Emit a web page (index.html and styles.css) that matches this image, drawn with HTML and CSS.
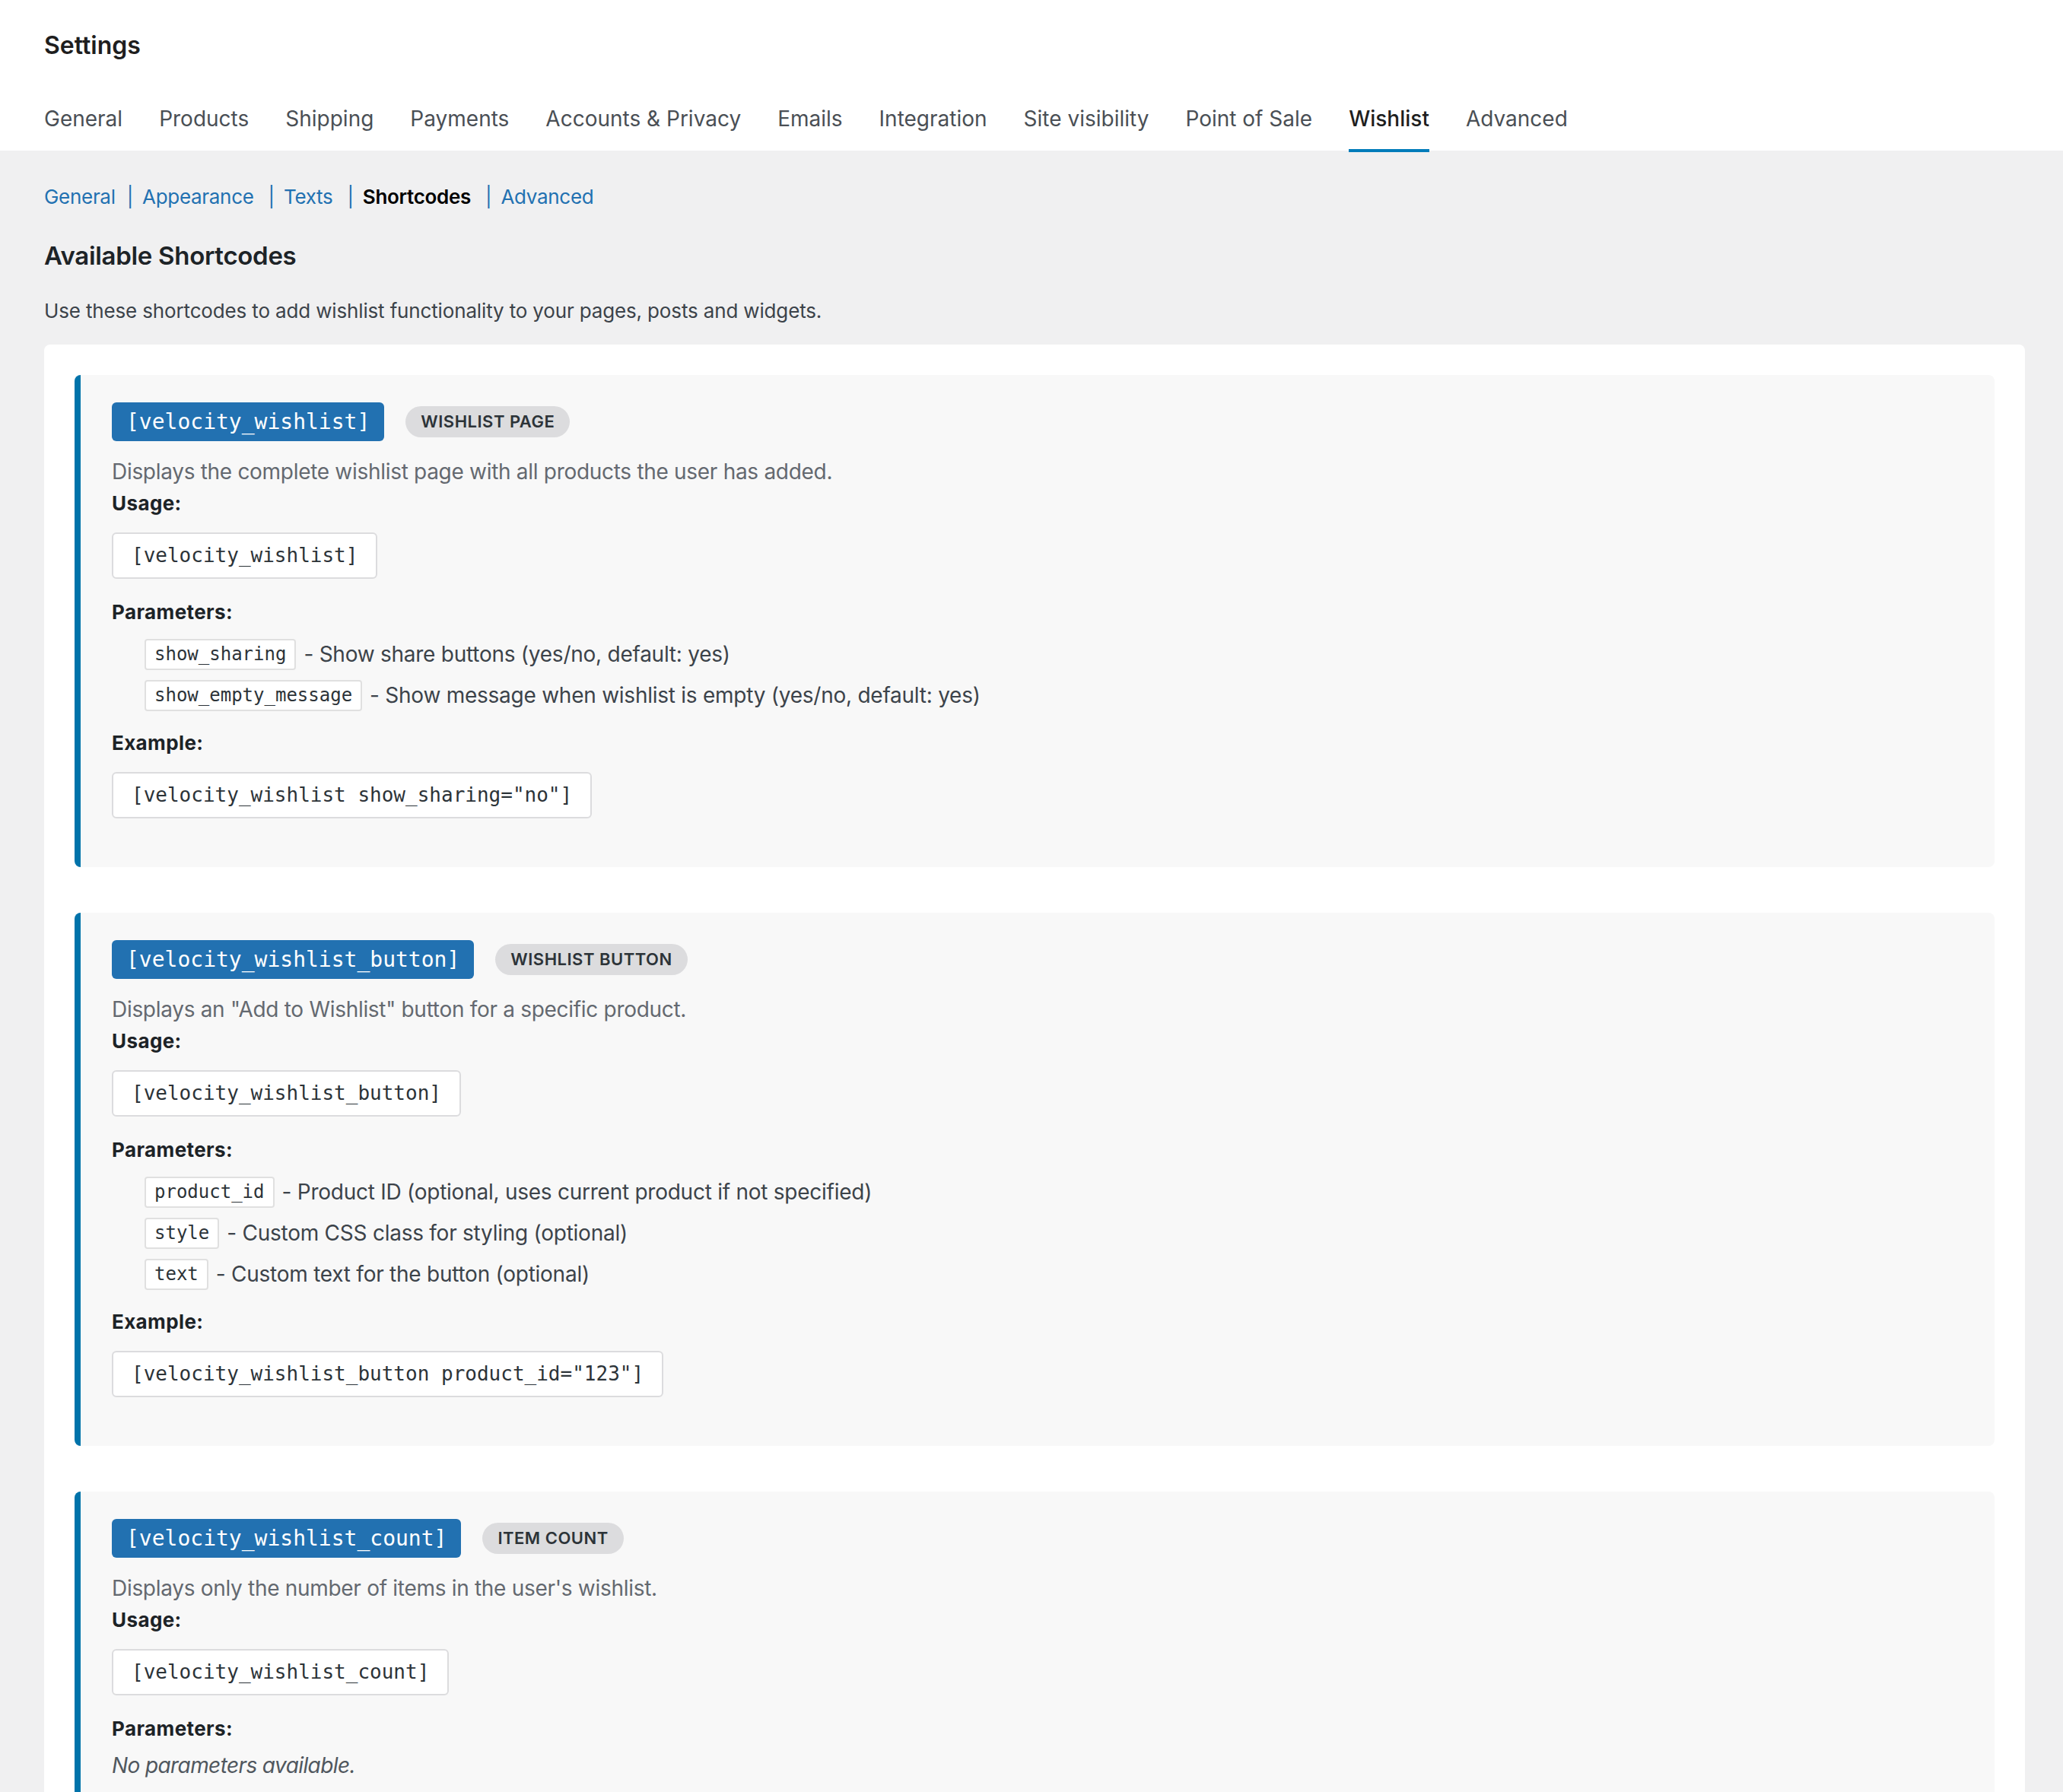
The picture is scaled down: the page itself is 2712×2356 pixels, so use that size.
FILE: index.html
```html
<!DOCTYPE html>
<html lang="en">
<head>
  <meta charset="UTF-8">
  <meta name="viewport" content="width=device-width, initial-scale=1.0">
  <title>Settings - Wishlist Shortcodes</title>
  <link rel="stylesheet" href="styles.css">
</head>
<body>

<div class="wc-header">
  <h1 class="page-title">Settings</h1>
  <nav class="nav-tabs">
    <a class="nav-tab" href="#">General</a>
    <a class="nav-tab" href="#">Products</a>
    <a class="nav-tab" href="#">Shipping</a>
    <a class="nav-tab" href="#">Payments</a>
    <a class="nav-tab" href="#">Accounts &amp; Privacy</a>
    <a class="nav-tab" href="#">Emails</a>
    <a class="nav-tab" href="#">Integration</a>
    <a class="nav-tab" href="#">Site visibility</a>
    <a class="nav-tab" href="#">Point of Sale</a>
    <a class="nav-tab active" href="#">Wishlist</a>
    <a class="nav-tab" href="#">Advanced</a>
  </nav>
</div>

<div class="wrap">
  <ul class="subsubsub">
    <li><a href="#">General</a><span class="sep">|</span></li>
    <li><a href="#">Appearance</a><span class="sep">|</span></li>
    <li><a href="#">Texts</a><span class="sep">|</span></li>
    <li><a href="#" class="current">Shortcodes</a><span class="sep">|</span></li>
    <li><a href="#">Advanced</a></li>
  </ul>

  <h2>Available Shortcodes</h2>
  <p class="intro">Use these shortcodes to add wishlist functionality to your pages, posts and widgets.</p>

  <div class="shortcodes-card">

    <div class="shortcode-item">
      <div class="shortcode-head">
        <code class="shortcode-tag">[velocity_wishlist]</code>
        <span class="shortcode-type">Wishlist Page</span>
      </div>
      <p class="shortcode-desc">Displays the complete wishlist page with all products the user has added.</p>
      <p class="label">Usage:</p>
      <div class="code-box">[velocity_wishlist]</div>
      <p class="label">Parameters:</p>
      <ul class="param-list">
        <li><code>show_sharing</code>- Show share buttons (yes/no, default: yes)</li>
        <li><code>show_empty_message</code>- Show message when wishlist is empty (yes/no, default: yes)</li>
      </ul>
      <p class="label">Example:</p>
      <div class="code-box example">[velocity_wishlist show_sharing="no"]</div>
    </div>

    <div class="shortcode-item">
      <div class="shortcode-head">
        <code class="shortcode-tag">[velocity_wishlist_button]</code>
        <span class="shortcode-type">Wishlist Button</span>
      </div>
      <p class="shortcode-desc">Displays an "Add to Wishlist" button for a specific product.</p>
      <p class="label">Usage:</p>
      <div class="code-box">[velocity_wishlist_button]</div>
      <p class="label">Parameters:</p>
      <ul class="param-list">
        <li><code>product_id</code>- Product ID (optional, uses current product if not specified)</li>
        <li><code>style</code>- Custom CSS class for styling (optional)</li>
        <li><code>text</code>- Custom text for the button (optional)</li>
      </ul>
      <p class="label">Example:</p>
      <div class="code-box example">[velocity_wishlist_button product_id="123"]</div>
    </div>

    <div class="shortcode-item">
      <div class="shortcode-head">
        <code class="shortcode-tag">[velocity_wishlist_count]</code>
        <span class="shortcode-type">Item Count</span>
      </div>
      <p class="shortcode-desc">Displays only the number of items in the user's wishlist.</p>
      <p class="label">Usage:</p>
      <div class="code-box">[velocity_wishlist_count]</div>
      <p class="label">Parameters:</p>
      <p class="no-params">No parameters available.</p>
    </div>

  </div>
</div>

</body>
</html>
```

FILE: styles.css
```css
* {
  box-sizing: border-box;
}

body {
  margin: 0;
  padding: 0;
  background-color: #f0f0f1;
  font-family: Inter, "Noto Sans", sans-serif;
  color: #3c434a;
}

/* top header with tabs */
.wc-header {
  background-color: #fff;
  height: 198px;
  padding: 40px 58px 0;
}

.page-title {
  margin: 0;
  font-size: 32px;
  line-height: 40px;
  font-weight: 600;
  color: #1e1e1e;
}

.nav-tabs {
  display: flex;
  align-items: flex-start;
  gap: 48px;
  margin-top: 58px;
}

.nav-tab {
  display: block;
  font-size: 28px;
  line-height: 36px;
  padding-bottom: 22px;
  border-bottom: 4px solid transparent;
  color: #4a4f55;
  text-decoration: none;
}

.nav-tab.active {
  color: #1e1e1e;
  font-weight: 500;
  border-bottom-color: #007cba;
}

/* page body */
.wrap {
  padding: 43px 50px 0 58px;
}

.subsubsub {
  display: flex;
  list-style: none;
  margin: 0;
  padding: 0;
  font-size: 26px;
  line-height: 36px;
  letter-spacing: -0.3px;
  color: #2271b1;
}

.subsubsub a {
  color: #2271b1;
  text-decoration: none;
}

.subsubsub a.current {
  color: #000;
  font-weight: 600;
}

.subsubsub .sep {
  margin: 0 12px 0 19px;
}

.subsubsub li:first-child .sep {
  margin-left: 15px;
}

h2 {
  margin: 37px 0 0;
  font-size: 33px;
  line-height: 44px;
  font-weight: 600;
  letter-spacing: -0.3px;
  color: #1d2327;
}

.intro {
  margin: 33px 0 0;
  font-size: 26px;
  line-height: 36px;
  letter-spacing: -0.15px;
  color: #3c434a;
}

.shortcodes-card {
  margin-top: 26px;
  background-color: #fff;
  padding: 40px;
  border-radius: 8px;
}

.shortcode-item {
  background-color: #f8f8f8;
  border-left: 8px solid #0073aa;
  border-radius: 8px;
  padding: 36px 40px 64px 41px;
}

.shortcode-item + .shortcode-item {
  margin-top: 60px;
}

.shortcode-head {
  display: flex;
  align-items: center;
  gap: 28px;
}

.shortcode-tag {
  font-family: "DejaVu Sans Mono", "Liberation Mono", monospace;
  font-size: 28px;
  line-height: 31px;
  padding: 10px 19px;
  background-color: #2271b1;
  color: #fff;
  border-radius: 6px;
}

.shortcode-type {
  font-size: 22px;
  line-height: 23px;
  font-weight: 600;
  letter-spacing: 0.5px;
  text-transform: uppercase;
  padding: 9px 20px;
  background-color: #dcdcde;
  color: #2c3338;
  border-radius: 21px;
}

.shortcode-desc {
  margin: 20px 0 0;
  font-size: 28px;
  line-height: 40px;
  letter-spacing: -0.3px;
  color: #646970;
}

.label {
  margin: 26px 0 0;
  font-size: 26px;
  line-height: 36px;
  font-weight: 700;
  letter-spacing: 0.4px;
  color: #1d2327;
}

.shortcode-desc + .label {
  margin-top: 4px;
}

.param-list + .label {
  margin-top: 24px;
}

.code-box {
  width: fit-content;
  margin-top: 20px;
  padding: 11px 24px;
  background-color: #fff;
  border: 2px solid #dcdcde;
  border-radius: 6px;
  font-family: "DejaVu Sans Mono", "Liberation Mono", monospace;
  font-size: 26px;
  line-height: 35px;
  color: #2c3338;
}

.code-box.example {
  margin-top: 20px;
}

.param-list {
  list-style: none;
  margin: 17px 0 0 43px;
  padding: 0;
}

.param-list li {
  display: flex;
  align-items: center;
  font-size: 28px;
  line-height: 41px;
  letter-spacing: -0.25px;
  color: #3c434a;
}

.param-list li + li {
  margin-top: 13px;
}

.param-list code {
  font-family: "DejaVu Sans Mono", "Liberation Mono", monospace;
  font-size: 24px;
  line-height: 29px;
  letter-spacing: 0;
  padding: 4px 11px;
  margin-right: 10px;
  background-color: #fff;
  border: 2px solid #e0e0e0;
  border-radius: 4px;
  color: #2c3338;
}

.no-params {
  margin: 10px 0 0;
  font-size: 28px;
  line-height: 40px;
  font-style: italic;
  letter-spacing: -0.6px;
  color: #50575e;
}
```
